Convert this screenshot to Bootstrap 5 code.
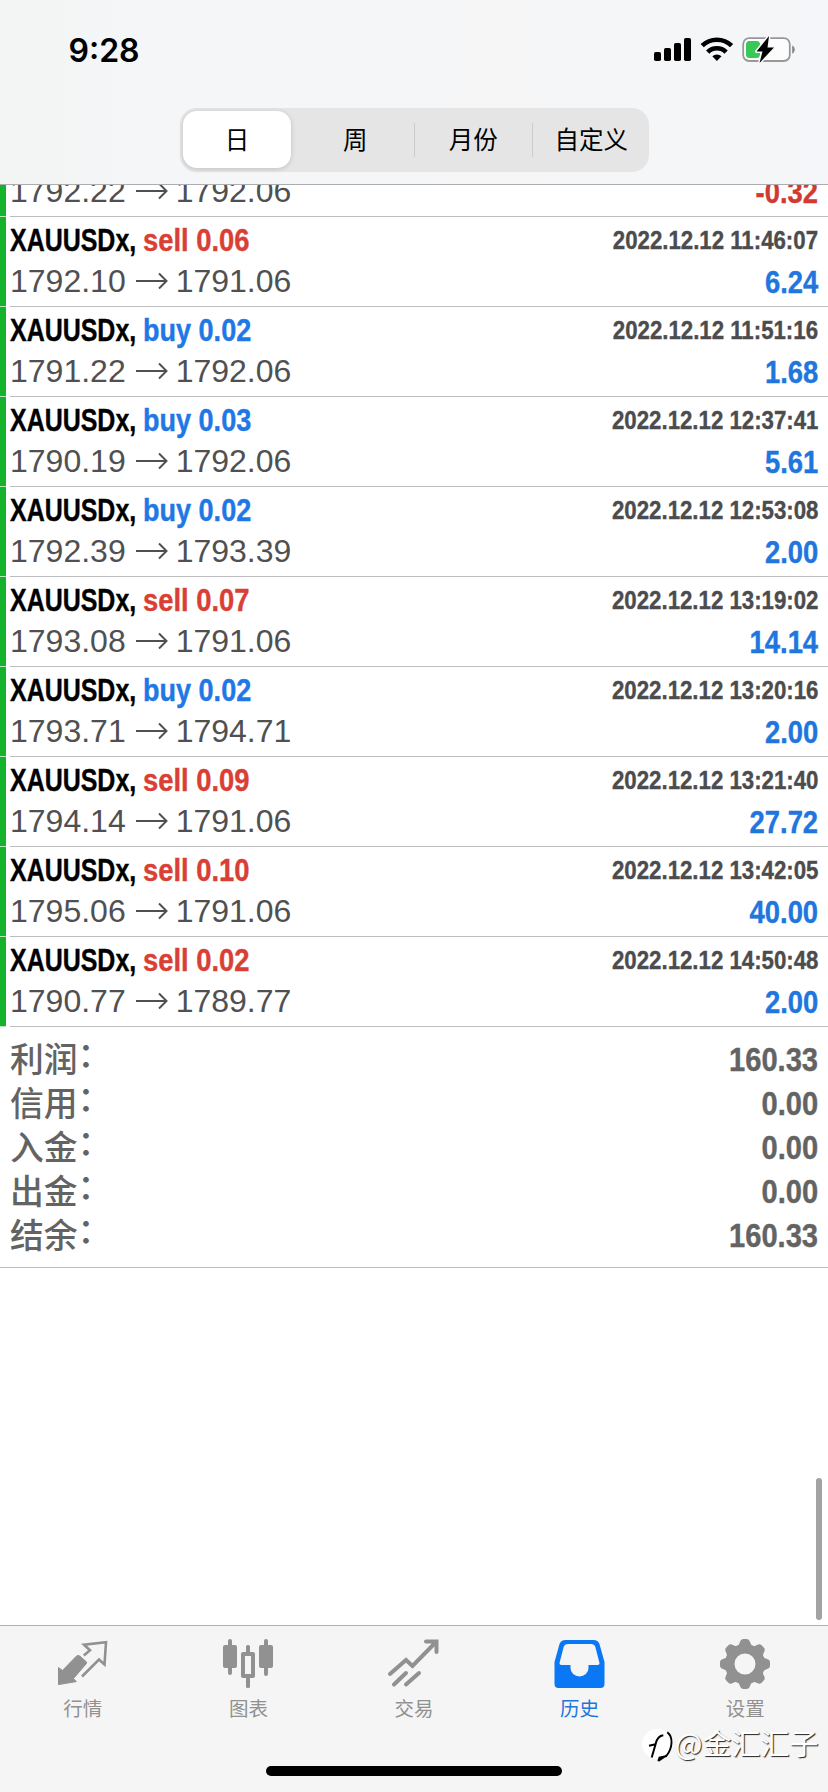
<!DOCTYPE html>
<html lang="zh-CN">
<head>
<meta charset="utf-8">
<meta name="viewport" content="width=device-width, initial-scale=1">
<title>历史</title>
<link href="https://cdn.jsdelivr.net/npm/bootstrap@5.3.0/dist/css/bootstrap.min.css" rel="stylesheet">
<style>
  body { width: 828px; height: 1792px; overflow: hidden; font-family: "Liberation Sans", "Noto Sans CJK SC", sans-serif; background: #fff; }
  .screen { height: 1792px; }
  .top-area { height: 185px; background: linear-gradient(90deg, #f3f5f4 0, #f5f6f8 160px, #f6f6f7 500px, #f5f6f9 100%); border-bottom: 1px solid #adadb0; }
  .status-bar { height: 108px; padding: 0 33px 0 68.5px; }
  .clock { font: 600 32px/36px Inter, sans-serif; color: #000; margin-top: 33px; }
  .status-icons { margin-top: 35px; }
  .segments { width: 469px; height: 64px; margin-left: 180px; padding: 3px 0 4px 3px; background: #e5e5e6; border-radius: 17px; font: 24.5px/56px "Noto Sans CJK SC", sans-serif; color: #000; }
  .segment { flex: none; width: 116.5px; height: 57px; text-align: center; }
  .segment.active { width: 108px; margin-right: 6px; background: #fff; border-radius: 14px; box-shadow: 0 1px 5px rgba(0,0,0,.16); }
  .divider { flex: none; width: 1.5px; height: 34px; background: #cbcbce; }
  .deals { height: 842px; overflow: hidden; }
  .deal { height: 90px; flex: none; border-left: 6px solid #15b22c; position: relative; padding: 0 9.800px 0 4px; }
  .deal::after { content: ""; position: absolute; left: 4px; right: 0; bottom: 0; height: 1px; background: #bdbdbf; }
  .deal::before { content: ""; position: absolute; left: -6px; width: 6px; bottom: 0; height: 1px; background: #b9e6bf; }
  /* condensed bold face made from the regular-width one */
  .narrow { font-weight: 700; white-space: nowrap; transform: scaleX(.855); transform-origin: right center; -webkit-text-stroke: .4px currentColor; }
  .narrow.symbol, .narrow.side { transform-origin: left center; font-size: 32px; }
  .narrow.symbol { width: 132.5px; transform: scaleX(.78); color: #000; }
  .narrow.buy { color: #1f78e6; transform: scaleX(.845); }
  .sell { color: #d93f35; }
  .deal-head { height: 47px; line-height: 47px; }
  .deal-body { height: 43px; line-height: 37px; }
  .stamp { font-size: 26px; color: #4c4c4e; }
  .price { font-size: 32px; color: #505052; line-height: 35px; }
  .arrow { vertical-align: 0; }
  .arrow path { fill: none; stroke: #505052; stroke-width: 2; }
  .amount { font-size: 32px; color: #2176dd; }
  .amount.loss { color: #d23a31; }
  .totals { height: 241px; padding: 10px 10px 0 10px; border-bottom: 1px solid #bdbdbf; color: #636363; }
  .total-row { height: 44px; line-height: 44px; }
  .total-name { font-family: "Noto Sans CJK SC", sans-serif; font-weight: 500; font-size: 33.800px; line-height: 42px; }
  .colon { display: inline-block; line-height: 30px; transform: translateY(-5px); }
  .total-value { font-size: 34px; }
  .scroll-thumb { width: 6px; height: 142px; border-radius: 3px; background: #a3a3a5; margin: 0 6px 5px auto; }
  .tab-area { height: 167px; background: #f5f5f5; border-top: 1px solid #b0b0b0; position: relative; }
  .tab { flex: 1 1 0; padding-top: 11px; color: #919191; text-align: center; font: 19.5px/28px "Noto Sans CJK SC", sans-serif; }
  .tab svg { width: 54px; height: 54px; }
  .tab.active { color: #0a78f5; }
  .tab-name { margin-top: 3px; }
  .tab.active .tab-name { color: #2276d8; }
  .home-bar { position: absolute; left: 266px; bottom: 16px; width: 296px; height: 10px; border-radius: 5px; background: #000; }
  .watermark { position: absolute; left: 641px; top: 98px; font: 29px/38px "Noto Sans CJK SC", sans-serif; color: #fff; text-shadow: 1px 1px 1px #222; white-space: nowrap; }
  .watermark span { margin-left: -2px; line-height: 36px; margin-bottom: 3px; }
</style>
</head>
<body>
<main class="screen d-flex flex-column">
  <header class="top-area flex-shrink-0">
    <div class="status-bar d-flex justify-content-between align-items-start">
      <div class="clock">9:28</div>
      <svg class="status-icons" width="143" height="30" viewBox="0 0 143 30">
        <g fill="#000"><rect x="2" y="17" width="7" height="9" rx="1.8"/><rect x="12" y="13" width="7" height="13" rx="1.8"/><rect x="22" y="8" width="7" height="18" rx="1.8"/><rect x="32" y="3" width="7" height="23" rx="1.8"/></g>
        <g fill="none" stroke="#000" stroke-width="4.6"><path d="M50.2 10.7a21 21 0 0 1 29.4 0"/><path d="M55.7 17.1a13 13 0 0 1 18.4 0"/></g>
        <path d="M60.3 21.3a7 7 0 0 1 9.2 0L64.900 26z"/>
        <rect x="91.200" y="3.200" width="46.600" height="22.800" rx="6" fill="#fff" fill-opacity=".7" stroke="#98989b" stroke-width="1.8"/>
        <rect x="94" y="6" width="14" height="17" rx="3.500" fill="#38c858"/>
        <path d="M140.200 10.500c3.400 1.200 3.400 7 0 8.200z" fill="#858588"/>
        <path d="M117 1L104.500 16.500h6L107.500 28 122 12.500h-6.500z" fill="#000" stroke="#f8f8f8" stroke-width="3" paint-order="stroke" stroke-linejoin="round"/>
      </svg>
    </div>
    <div class="segments d-flex align-items-center">
      <div class="segment active">日</div>
      <div class="segment">周</div>
      <div class="divider"></div>
      <div class="segment">月份</div>
      <div class="divider"></div>
      <div class="segment">自定义</div>
    </div>
  </header>

  <section class="deals d-flex flex-column justify-content-end flex-shrink-0" id="deals"></section>

  <section class="totals flex-shrink-0">
    <div class="total-row d-flex justify-content-between"><span class="total-name">利润<span class="colon">：</span></span><span class="narrow total-value">160.33</span></div>
    <div class="total-row d-flex justify-content-between"><span class="total-name">信用<span class="colon">：</span></span><span class="narrow total-value">0.00</span></div>
    <div class="total-row d-flex justify-content-between"><span class="total-name">入金<span class="colon">：</span></span><span class="narrow total-value">0.00</span></div>
    <div class="total-row d-flex justify-content-between"><span class="total-name">出金<span class="colon">：</span></span><span class="narrow total-value">0.00</span></div>
    <div class="total-row d-flex justify-content-between"><span class="total-name">结余<span class="colon">：</span></span><span class="narrow total-value">160.33</span></div>
  </section>

  <div class="flex-grow-1 d-flex align-items-end"><div class="scroll-thumb"></div></div>

  <footer class="tab-area flex-shrink-0">
    <nav class="d-flex">
      <div class="tab">
        <svg viewBox="0 0 54 54"><path d="M2.500 30.500L6.500 33.500 20 19.500Q22 17.500 24 19.200L30 24.500Q31.300 25.800 30 27L17.500 41.500 20.300 44.600 2.500 47.600z" fill="currentColor" stroke="currentColor" stroke-width="1" stroke-linejoin="round"/><path d="M27.800 18.500L34 13.300 28 7.800 50 5.300 48.500 27.500 43 22.500 26 39.500" fill="none" stroke="currentColor" stroke-width="2.600"/></svg>
        <div class="tab-name">行情</div>
      </div>
      <div class="tab">
        <svg viewBox="0 0 54 54"><g fill="currentColor"><rect x="7" y="2" width="4" height="36" rx="2"/><rect x="2" y="8" width="14" height="23" rx="2"/><rect x="43" y="2" width="4" height="37" rx="2"/><rect x="38" y="8" width="14" height="23" rx="2"/><rect x="25" y="8" width="4" height="9" rx="1.500"/><rect x="25" y="40" width="4" height="11" rx="1.500"/></g><rect x="22" y="17" width="10" height="22" fill="none" stroke="currentColor" stroke-width="4" stroke-linejoin="round"/></svg>
        <div class="tab-name">图表</div>
      </div>
      <div class="tab">
        <svg viewBox="0 0 54 54"><path d="M3 37L19 23 25.500 29 49 5M39 4.500H49.500V15M7 47.500L19 36M19 47.500L32 36" fill="none" stroke="currentColor" stroke-width="4" stroke-linecap="round"/></svg>
        <div class="tab-name">交易</div>
      </div>
      <div class="tab active">
        <svg viewBox="-.5 0 54 54"><path fill-rule="evenodd" d="M12 3H40Q44.500 3 46 7L51 25V47Q51 51 47 51H5Q1 51 1 47V25L6 7Q7.500 3 12 3zM14 7Q11 7 10.300 9.500L6 26Q5.700 28 8 28H17V31A9 8.500 0 0 0 35 31V28H44Q46.300 28 46 26L41.700 9.500Q41 7 38 7z" fill="currentColor"/></svg>
        <div class="tab-name">历史</div>
      </div>
      <div class="tab">
        <svg viewBox="0 0 54 54"><circle cx="27" cy="27" r="15.300" fill="none" stroke="currentColor" stroke-width="9.600"/><g fill="currentColor"><path id="tooth" d="M18.500 10Q21 8.500 22 5Q22.800 2 25.500 2H28.500Q31.200 2 32 5Q33 8.500 35.500 10z"/><use href="#tooth" transform="rotate(45 27 27)"/><use href="#tooth" transform="rotate(90 27 27)"/><use href="#tooth" transform="rotate(135 27 27)"/><use href="#tooth" transform="rotate(180 27 27)"/><use href="#tooth" transform="rotate(225 27 27)"/><use href="#tooth" transform="rotate(270 27 27)"/><use href="#tooth" transform="rotate(315 27 27)"/></g></svg>
        <div class="tab-name">设置</div>
      </div>
    </nav>
    <div class="home-bar"></div>
    <div class="watermark d-flex align-items-center">
      <svg width="36" height="38" viewBox="0 0 36 38"><circle cx="16" cy="19" r="15" fill="#fff"/><path d="M10.700 32.500L14.700 18.700Q16.500 11 22.300 10.300M8 20.700L14.500 19.300" fill="none" stroke="#000" stroke-width="2"/><path d="M26.300 7.300Q31 11 30.500 18T26 30L17.300 36M26 31L18.500 32.500 17.300 36" fill="none" stroke="#000" stroke-width="1.900"/></svg><span>@金汇汇子</span>
    </div>
  </footer>
</main>
<script>
  const deals = [
    ['', '', '', '1792.22', '1792.06', '-0.32'],
    ['sell', '0.06', '11:46:07', '1792.10', '1791.06', '6.24'],
    ['buy', '0.02', '11:51:16', '1791.22', '1792.06', '1.68'],
    ['buy', '0.03', '12:37:41', '1790.19', '1792.06', '5.61'],
    ['buy', '0.02', '12:53:08', '1792.39', '1793.39', '2.00'],
    ['sell', '0.07', '13:19:02', '1793.08', '1791.06', '14.14'],
    ['buy', '0.02', '13:20:16', '1793.71', '1794.71', '2.00'],
    ['sell', '0.09', '13:21:40', '1794.14', '1791.06', '27.72'],
    ['sell', '0.10', '13:42:05', '1795.06', '1791.06', '40.00'],
    ['sell', '0.02', '14:50:48', '1790.77', '1789.77', '2.00']
  ];
  document.getElementById('deals').innerHTML = deals.map(([side, lots, time, open, close, amount]) => `
    <div class="deal">
      <div class="deal-head d-flex">${side ? `<span class="narrow symbol">XAUUSDx,</span><span class="narrow side ${side}">${side} ${lots}</span><span class="narrow stamp ms-auto">2022.12.12 ${time}</span>` : ''}</div>
      <div class="deal-body d-flex justify-content-between">
        <span class="price">${open}<svg class="arrow" width="50" height="22" viewBox="0 0 50 22"><path d="M10 11H40.500M33 3.500L40.500 11L33 18.500"/></svg>${close}</span>
        <span class="narrow amount ${amount[0] === '-' ? 'loss' : ''}">${amount}</span>
      </div>
    </div>`).join('');
</script>
<script src="https://cdn.jsdelivr.net/npm/bootstrap@5.3.0/dist/js/bootstrap.bundle.min.js"></script>
</body>
</html>
